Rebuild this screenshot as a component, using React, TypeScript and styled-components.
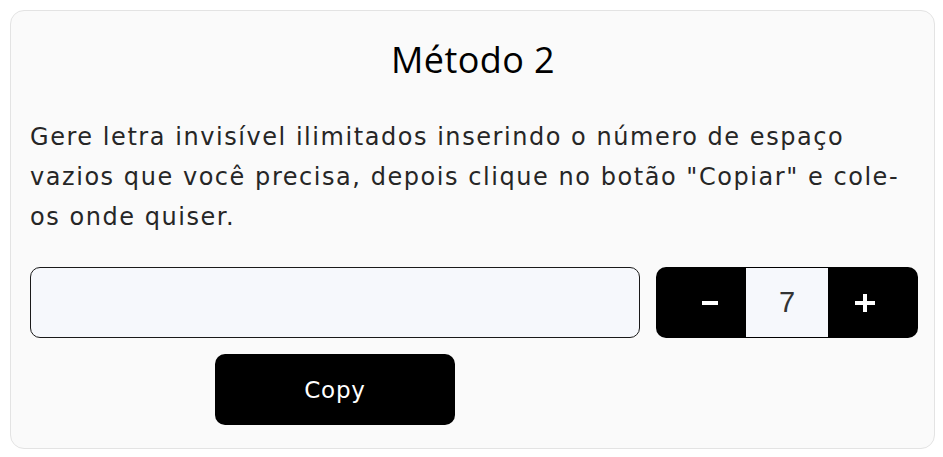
import React, { useState } from "react";
import styled, { createGlobalStyle } from "styled-components";

const Global = createGlobalStyle`
  html, body { margin: 0; padding: 0; background: #ffffff; }
  body { font-family: "DejaVu Sans", "Open Sans", Arial, sans-serif; }
  * { box-sizing: border-box; }
`;

const Page = styled.div`
  padding: 10px;
`;

const Card = styled.section`
  width: 925px;
  height: 439px;
  background: #fafafa;
  border: 1px solid #e3e3e3;
  border-radius: 14px;
  padding: 23px 18px 0 19px;
  display: flex;
  flex-direction: column;
`;

const Title = styled.h2`
  margin: 0;
  text-align: center;
  font-family: "Open Sans", sans-serif;
  font-weight: 500;
  font-size: 36px;
  line-height: 52px;
  color: #000;
  letter-spacing: 0.4px;
`;

const Text = styled.p`
  margin: 31px 0 0;
  font-family: "DejaVu Sans", sans-serif;
  font-weight: 400;
  font-size: 24px;
  line-height: 40px;
  color: #262626;
  letter-spacing: 1.55px;
  white-space: nowrap;
`;

const Controls = styled.div`
  margin-top: 30px;
  display: grid;
  grid-template-columns: 610px 262px;
  column-gap: 16px;
  row-gap: 16px;
`;

const Field = styled.input`
  height: 71px;
  border: 1px solid #1a1a1a;
  border-radius: 10px;
  background: #f6f8fc;
  font-size: 20px;
  padding: 0 16px;
  outline: none;
`;

const Stepper = styled.div`
  height: 71px;
  background: #000;
  border-radius: 10px;
  display: grid;
  grid-template-columns: 72px 82px 73px;
  padding: 1px 17px 1px 18px;
`;

const StepButton = styled.button`
  background: transparent;
  border: none;
  color: #fff;
  display: flex;
  align-items: center;
  justify-content: center;
  padding: 0;
  cursor: pointer;
`;

const Count = styled.div`
  background: #f6f8fc;
  color: #333;
  font-family: "Liberation Sans", Arial, sans-serif;
  font-size: 29px;
  display: flex;
  align-items: center;
  justify-content: center;
`;

const CopyCell = styled.div`
  display: flex;
  justify-content: center;
`;

const CopyButton = styled.button`
  width: 240px;
  height: 71px;
  background: #000;
  color: #fff;
  border: none;
  border-radius: 10px;
  font-family: "DejaVu Sans", sans-serif;
  font-weight: 400;
  font-size: 23px;
  letter-spacing: 0.8px;
  cursor: pointer;
`;

const MinusIcon = () => (
  <svg width="16" height="4" viewBox="0 0 16 4" aria-hidden="true">
    <rect x="0" y="0" width="16" height="4" fill="#fff" />
  </svg>
);

const PlusIcon = () => (
  <svg width="20" height="18" viewBox="0 0 20 18" aria-hidden="true">
    <rect x="0" y="7" width="20" height="4" fill="#fff" />
    <rect x="8" y="0" width="4" height="18" fill="#fff" />
  </svg>
);

export default function App() {
  const [count, setCount] = useState(7);
  return (
    <Page>
      <Global />
      <Card>
        <Title>Método 2</Title>
        <Text>
          Gere letra invisível ilimitados inserindo o número de espaço
          <br />
          vazios que você precisa, depois clique no botão "Copiar" e cole-
          <br />
          os onde quiser.
        </Text>
        <Controls>
          <Field aria-label="espaços" />
          <Stepper>
            <StepButton aria-label="-" onClick={() => setCount((c) => Math.max(1, c - 1))}>
              <MinusIcon />
            </StepButton>
            <Count>{count}</Count>
            <StepButton aria-label="+" onClick={() => setCount((c) => c + 1)}>
              <PlusIcon />
            </StepButton>
          </Stepper>
          <CopyCell>
            <CopyButton>Copy</CopyButton>
          </CopyCell>
        </Controls>
      </Card>
    </Page>
  );
}
